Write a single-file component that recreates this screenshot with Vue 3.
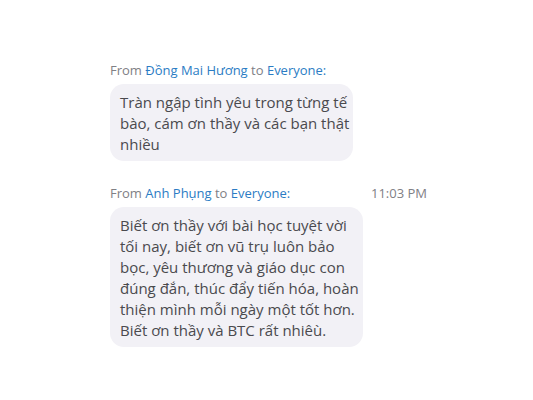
<script setup>
const messages = [
  {
    id: 1,
    author: 'Đồng Mai Hương',
    target: 'Everyone',
    time: '',
    lines: ['Tràn ngập tình yêu trong từng tế', 'bào, cám ơn thầy và các bạn thật', 'nhiều'],
  },
  {
    id: 2,
    author: 'Anh Phụng',
    target: 'Everyone',
    time: '11:03 PM',
    lines: [
      'Biết ơn thầy với bài học tuyệt vời',
      'tối nay, biết ơn vũ trụ luôn bảo',
      'bọc, yêu thương và giáo dục con',
      'đúng đắn, thúc đẩy tiến hóa, hoàn',
      'thiện mình mỗi ngày một tốt hơn.',
      'Biết ơn thầy và BTC rất nhiêù.',
    ],
  },
]
</script>

<template>
  <main class="chat">
    <article v-for="message in messages" :key="message.id" class="message">
      <header class="message__header">
        <span>
          From <a href="#">{{ message.author }}</a> to <a href="#">{{ message.target }}:</a>
        </span>
        <time v-if="message.time">{{ message.time }}</time>
      </header>
      <p class="message__body">
        <template v-for="(line, index) in message.lines" :key="index">
          <br v-if="index > 0" />{{ line }}
        </template>
      </p>
    </article>
  </main>
</template>

<style>
body {
  margin: 0;
  background: #ffffff;
}
</style>

<style scoped>
.chat {
  display: flex;
  flex-direction: column;
  gap: 22px;
  padding: 60px 106px 53px 110px;
  font-family: 'Open Sans', 'Noto Sans', sans-serif;
}

.message__header {
  display: flex;
  justify-content: space-between;
  font-size: 13px;
  line-height: 20px;
  margin-bottom: 4px;
  color: #808085;
  white-space: nowrap;
}

.message__header a {
  color: #2b7cc4;
  text-decoration: none;
}

.message__body {
  width: fit-content;
  box-sizing: border-box;
  margin: 0;
  padding: 8px 4px 6px 10px;
  border-radius: 14px;
  background: #f2f1f6;
  color: #4a4a4e;
  font-size: 15px;
  line-height: 21px;
  white-space: nowrap;
}
</style>
